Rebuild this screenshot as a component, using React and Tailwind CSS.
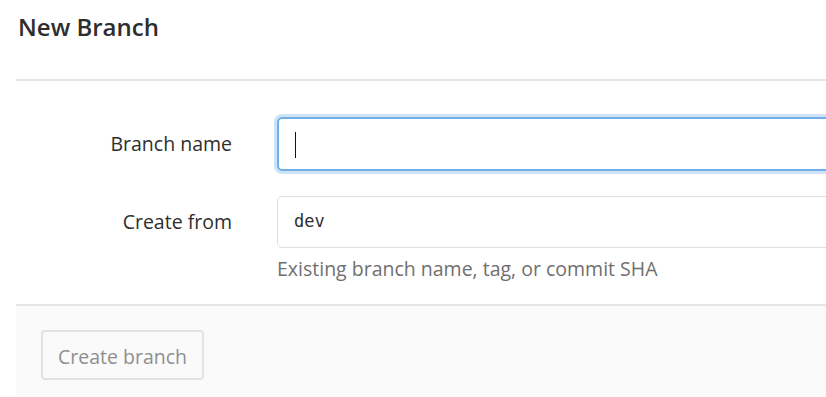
import React from 'react';

function App() {
  return (
    <div className="w-[826px] h-[397px] overflow-hidden bg-white font-['Open_Sans',sans-serif] text-[#2e2e2e]">
      <div className="pl-[16px]">
        <h3 className="pl-[2px] pt-[9px] h-[79px] text-[24px] font-semibold leading-[36px]">New Branch</h3>
        <div className="border-t-2 border-[#e5e5e5]" />

        <div className="pt-[36px]">
          <div className="flex items-center h-[54px]">
            <label className="w-[216px] shrink-0 text-right text-[19.5px]">Branch name</label>
            <div className="ml-[45px] relative w-[600px] shrink-0 h-[54px] rounded-[5px] border-2 border-[#73afea] shadow-[0_0_0_3px_rgba(115,175,234,0.35)] bg-white">
              <div className="absolute left-[16px] top-[13px] w-px h-[26px] bg-[#111]" />
            </div>
          </div>

          <div className="flex items-center h-[52px] mt-[25px]">
            <label className="w-[216px] shrink-0 text-right text-[19.5px]">Create from</label>
            <div className="ml-[45px] w-[600px] shrink-0 h-[52px] rounded-[5px] border border-[#dfdfdf] bg-white flex items-center pl-[16px] font-['DejaVu_Sans_Mono',monospace] text-[17px]">
              dev
            </div>
          </div>
          <div className="ml-[261px] mt-[6px] text-[19.5px] leading-[30px] text-[#707070]">Existing branch name, tag, or commit SHA</div>
        </div>

        <div className="mt-[20px] border-t-2 border-[#e5e5e5] bg-[#fafafa] h-[100px] pl-[25px] pt-[24px]">
          <button className="h-[50px] w-[163px] pt-[3px] rounded-[4px] border-2 border-[#e2e2e2] text-[19.5px] text-[#8f8f8f] bg-[#fafafa]">
            Create branch
          </button>
        </div>
      </div>
    </div>
  );
}

export default App;
